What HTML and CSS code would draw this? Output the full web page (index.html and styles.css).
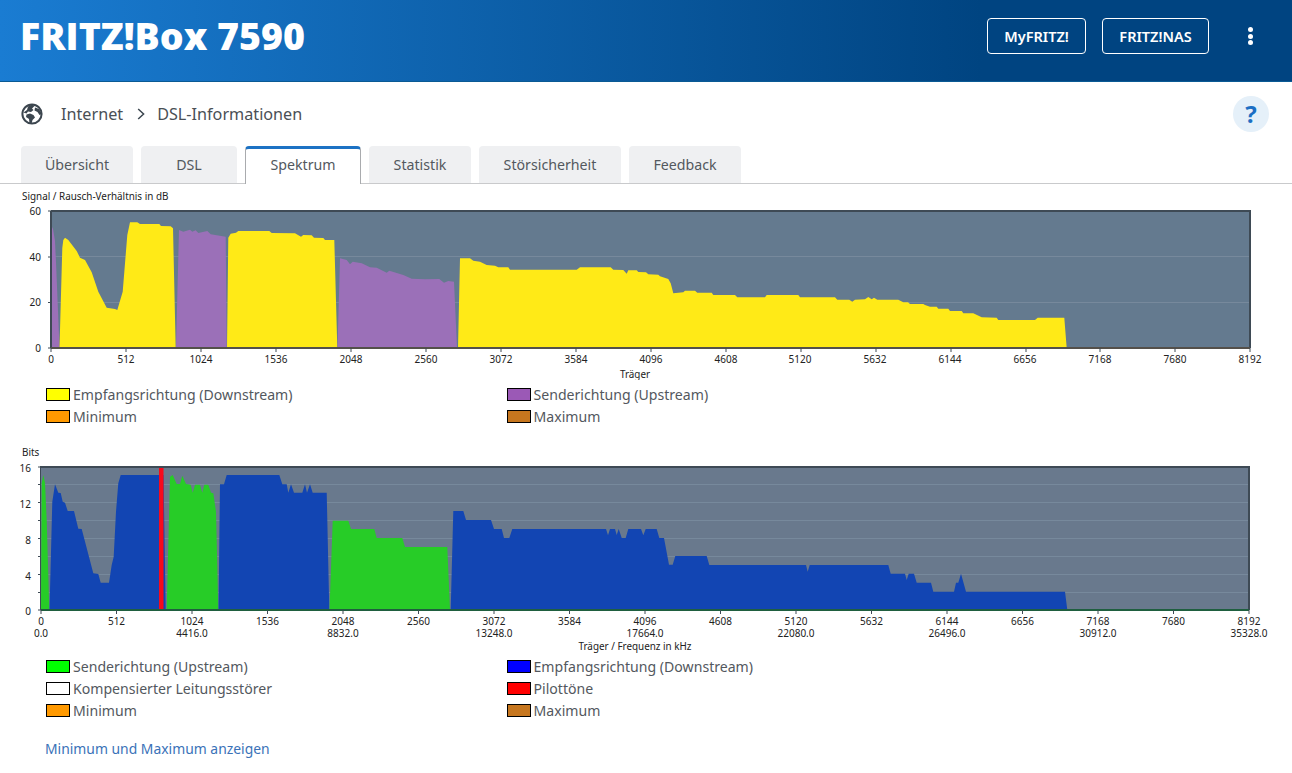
FILE: index.html
```html
<!DOCTYPE html>
<html lang="de">
<head>
<meta charset="utf-8">
<title>FRITZ!Box 7590</title>
<link rel="stylesheet" href="styles.css">
</head>
<body>
<header class="topbar">
  <div class="brand">FRITZ!Box 7590</div>
  <div class="top-actions">
    <a class="top-btn btn-myfritz">MyFRITZ!</a>
    <a class="top-btn btn-nas">FRITZ!NAS</a>
    <span class="kebab"><i></i><i></i><i></i></span>
  </div>
</header>
<div class="crumbs">
  <svg class="globe" viewBox="0 0 22 22" width="22" height="22" aria-hidden="true">
    <circle cx="11" cy="11" r="9.6" fill="#fff" stroke="#3c464f" stroke-width="2"/>
    <path fill="#3c464f" d="M2.5 9.5 6 7l1-3.5L11 1.5l2.5 1.5L11 5.5 12.5 7 10 9 7 8.5 5.5 10.5Z"/>
    <path fill="#3c464f" d="M5.5 11.5 9 10.5l3.5 1.5 1.5 2.5-2.5 2.5-1 4-2-.5-.5-4.5-3-2Z"/>
    <path fill="#3c464f" d="M14 4.5l4 1.5 3 5-2.5 1-2-3-3-1.5Z"/>
  </svg>
  <span class="crumb-first">Internet</span>
  <svg class="chev" viewBox="0 0 8 12" width="8" height="12" aria-hidden="true"><path d="M1.2 1 6.6 6 1.2 11" fill="none" stroke="#3c464f" stroke-width="1.5"/></svg>
  <span class="crumb-last">DSL-Informationen</span>
  <span class="help">?</span>
</div>
<nav class="tabs">
  <a class="tab">Übersicht</a>
  <a class="tab">DSL</a>
  <a class="tab active">Spektrum</a>
  <a class="tab">Statistik</a>
  <a class="tab">Störsicherheit</a>
  <a class="tab">Feedback</a>
</nav>
<main class="content">
  <svg class="chart chart-snr" viewBox="0 190 1292 190" role="img">
    <text class="ctitle" x="22" y="200">Signal / Rausch-Verhältnis in dB</text>
    <rect class="plot" x="51" y="211" width="1199" height="137"/>
    <path class="grid" d="M51 256.5H1250M51 302.5H1250"/>
    <polygon class="snr-up" points="51,348 51,240 52,227 53,229 55,241 56,262 59.5,348"/>
    <polygon class="snr-down" points="59.5,348 62.3,248 63.3,240 65,237.7 68.3,240 76.7,251 80,257.7 85,260 91.7,272.3 98.3,291.7 106.7,307.7 115,309 117.3,310 122.7,291.7 127.3,235 130,222.3 137.3,222.3 140,224 159.3,224 161,226 170.7,226.3 173,228.3 175.7,348"/>
    <polygon class="snr-up" points="176,348 179,230 183.3,231.7 190,229.7 192.3,231.7 195.7,230.3 198.3,233 207.3,231 210.7,234.3 225.7,236.7 226.7,348"/>
    <polygon class="snr-down" points="227,348 228.3,237.7 230.7,233.7 236,232.7 238.3,231 269.3,231 271.7,233 295,233.3 301,236.7 303.3,235 311.7,235.3 314,237.7 323.3,238 325,240 334.3,240 337.3,348"/>
    <polygon class="snr-up" points="337.5,348 340,258.3 346.7,260 350,264.3 352.7,261.7 361.7,263.3 370,267.3 376.7,267.7 386.7,272.7 389.3,270.7 403.3,275 411.7,278.7 425,279.3 439.3,279 444,282.7 448.3,281 454,281.7 457,348"/>
    <polygon class="snr-down" points="458,348 460,258.3 470,258.3 473.3,260.7 480,261.7 486.7,265 495,265.7 498.3,267.3 508.3,267.3 510,269.7 576.7,269.7 580,267.3 610.7,267.3 613.3,269.7 623.3,270 626.7,273.7 628.3,270.3 636.7,270.3 638.3,272 646,272.3 648.3,274.3 658.3,274.7 660,276.3 668.3,279 670.7,283.3 673.3,293.3 683.3,292.3 685,290.7 695,290.7 697.3,292.7 711.7,292.7 713.3,295 735,295 737.3,297.3 765,297.3 766.7,295 798.3,295 800,297.3 835,297.3 837.3,299.7 849.3,299.7 852.3,301.7 855,299.7 865,299.3 868.3,297 871.7,299.3 874,297.7 877.3,299.7 898.3,299.7 903.3,302.3 908,302.3 910,304 923.3,304 925,305 930,306.7 936.7,306.7 938.3,308.7 948.3,308.7 950,311 961.7,311 963.3,313.3 973.3,313.3 981.7,317.3 996.7,317.7 998.3,320 1035,320 1037.7,317.7 1064.3,317.7 1066.7,348"/>
    <path class="frame" d="M51 211H1250V348M51 211V348"/>
    <path class="axis-b1" d="M51 348H1250"/>
    <path class="tick" d="M48 211H51M48 257H51M48 302.5H51M48 348H51M51 348v4M126 348v4M201 348v4M276 348v4M351 348v4M426 348v4M501 348v4M576 348v4M651 348v4M726 348v4M801 348v4M876 348v4M951 348v4M1026 348v4M1100 348v4M1175 348v4M1250 348v4"/>
    <g class="ylab">
      <text x="41" y="215">60</text><text x="41" y="261">40</text><text x="41" y="306">20</text><text x="41" y="352">0</text>
    </g>
    <g class="xlab">
      <text x="51" y="363">0</text><text x="126" y="363">512</text><text x="201" y="363">1024</text><text x="276" y="363">1536</text><text x="351" y="363">2048</text><text x="426" y="363">2560</text><text x="501" y="363">3072</text><text x="576" y="363">3584</text><text x="651" y="363">4096</text><text x="726" y="363">4608</text><text x="800" y="363">5120</text><text x="875" y="363">5632</text><text x="950" y="363">6144</text><text x="1025" y="363">6656</text><text x="1100" y="363">7168</text><text x="1175" y="363">7680</text><text x="1250" y="363">8192</text>
    </g>
    <text class="axtitle" x="635" y="378">Träger</text>
  </svg>
  <div class="legend">
    <div class="leg"><i class="sw sw-yellow"></i>Empfangsrichtung (Downstream)</div>
    <div class="leg"><i class="sw sw-purple"></i>Senderichtung (Upstream)</div>
    <div class="leg"><i class="sw sw-orange"></i>Minimum</div>
    <div class="leg"><i class="sw sw-brown"></i>Maximum</div>
  </div>
  <svg class="chart chart-bits" viewBox="0 445 1292 210" role="img">
    <text class="ctitle" x="22" y="456">Bits</text>
    <rect class="plot plot2" x="41" y="467" width="1208" height="143"/>
    <path class="grid" d="M41 484.5H1249M41 502.5H1249M41 520.5H1249M41 538.5H1249M41 556.5H1249M41 574.5H1249M41 592.5H1249"/>
    <polygon class="b-up" points="41,610 41.7,483.3 43.3,475 45,483 46.7,520 49.3,610"/>
    <polygon class="b-down" points="49.5,610 52.3,501.7 55,484.3 58.3,492.7 60.7,493 62.7,501.7 65,502.7 67.7,511 74,511 78.3,528.7 81.7,529 93.3,573.3 98.3,574 100.7,582.7 109,582.7 111.7,565 113.7,556.7 116,511.7 118.3,483.3 120.7,475 163.5,475 165.7,610"/>
    <polygon class="b-up" points="166.7,610 170,476.7 172.7,475 176.7,484 180,484 182.3,475.7 186,484 190.7,484.7 192.7,492.7 195,484.7 200,484.7 202.3,492.7 204.3,484.7 208.3,484.7 211,492.7 213.3,493.3 216,511.7 218.3,610"/>
    <polygon class="b-down" points="218.5,610 220,484.3 224,484.3 226.7,475 279.3,475 282.3,484.3 286.7,484.3 288.3,492.7 291,484.3 294,492.7 302.3,492.7 305,484.3 307,492.7 310,484.3 312.7,492.7 326.7,492.7 329.3,610"/>
    <polygon class="b-up" points="329.5,610 332.7,520.7 348.3,520.7 351,529 374.3,529 376.7,538 402.3,538 405,547 447.3,547 450,610"/>
    <polygon class="b-down" points="450.7,610 453.3,511 463.3,511 466,520 491,520 494,529 501.7,529 504,538 509.3,538 512.3,529 606,529 608,535.3 610,529 615,529 616.7,535 618.7,529 621.7,538 625.7,538 628.3,529 641,529 643.3,535.3 645.7,529 656.7,529 659.3,538 664,538 669,564.7 672.7,564.7 675.3,556 706.7,556 709.3,565 806,565 807.7,571.7 809.7,565 888.3,565 890.7,573.7 905,573.7 906.7,580 908.7,573.7 914,573.7 916.7,582.7 931,582.7 933.3,591.7 954,591.7 956,582.7 958.3,582.7 961,573.7 966,591.7 1065,591.7 1067.3,610"/>
    <rect class="pilot" x="159" y="467" width="4.5" height="143"/>
    <path class="frame" d="M41 467H1249V610"/>
    <path class="axis-b2" d="M41 610H1249"/>
    <path class="axis-l2" d="M40.5 466V610"/>
    <path class="tick" d="M38 467H41M38 484.5H41M38 502.5H41M38 520.5H41M38 538.5H41M38 556.5H41M38 574.5H41M38 592.5H41M38 610H41M41 610v4M116.5 610v4M192 610v4M267.5 610v4M343 610v4M418.5 610v4M494 610v4M569.5 610v4M645 610v4M720.5 610v4M796 610v4M871.5 610v4M947 610v4M1022.5 610v4M1098 610v4M1173.5 610v4M1249 610v4"/>
    <g class="ylab">
      <text x="31" y="472">16</text><text x="31" y="508">12</text><text x="31" y="544">8</text><text x="31" y="580">4</text><text x="31" y="615">0</text>
    </g>
    <g class="xlab">
      <text x="41" y="625">0</text><text x="116.5" y="625">512</text><text x="192" y="625">1024</text><text x="267.5" y="625">1536</text><text x="343" y="625">2048</text><text x="418.5" y="625">2560</text><text x="494" y="625">3072</text><text x="569.5" y="625">3584</text><text x="645" y="625">4096</text><text x="720.5" y="625">4608</text><text x="796" y="625">5120</text><text x="871.5" y="625">5632</text><text x="947" y="625">6144</text><text x="1022.5" y="625">6656</text><text x="1098" y="625">7168</text><text x="1173.5" y="625">7680</text><text x="1249" y="625">8192</text>
      <text x="41" y="637">0.0</text><text x="192" y="637">4416.0</text><text x="343" y="637">8832.0</text><text x="494" y="637">13248.0</text><text x="645" y="637">17664.0</text><text x="796" y="637">22080.0</text><text x="947" y="637">26496.0</text><text x="1098" y="637">30912.0</text><text x="1249" y="637">35328.0</text>
    </g>
    <text class="axtitle" x="635" y="650">Träger / Frequenz in kHz</text>
  </svg>
  <div class="legend legend-bits">
    <div class="leg"><i class="sw sw-green"></i>Senderichtung (Upstream)</div>
    <div class="leg"><i class="sw sw-blue"></i>Empfangsrichtung (Downstream)</div>
    <div class="leg"><i class="sw sw-white"></i>Kompensierter Leitungsstörer</div>
    <div class="leg"><i class="sw sw-red"></i>Pilottöne</div>
    <div class="leg"><i class="sw sw-orange"></i>Minimum</div>
    <div class="leg"><i class="sw sw-brown"></i>Maximum</div>
  </div>
  <a class="minmax">Minimum und Maximum anzeigen</a>
</main>
</body>
</html>
```
FILE: styles.css
```css
* { box-sizing: border-box; }
html, body { margin: 0; padding: 0; }
body {
  width: 1292px;
  height: 773px;
  overflow: hidden;
  background: #fff;
  color: #4a4f55;
  font-family: "Noto Sans", "Open Sans", sans-serif;
}
.topbar {
  height: 82px;
  display: flex;
  align-items: center;
  justify-content: space-between;
  padding: 0 0 9px 20px;
  background: linear-gradient(90deg, #1a7cd2 0, #004481 76%);
  border-bottom: 1px solid #0a5a94;
}
.brand {
  color: #fff;
  font-family: "Open Sans", sans-serif;
  font-weight: 800;
  font-size: 37.5px;
  line-height: 44px;
  white-space: nowrap;
}
.top-actions { display: flex; align-items: center; }
.top-btn {
  height: 36px;
  display: flex;
  align-items: center;
  justify-content: center;
  border: 1px solid #fff;
  border-radius: 4px;
  color: #fff;
  font-weight: 600;
  font-size: 14.5px;
  white-space: nowrap;
}
.btn-myfritz { width: 99px; margin-right: 16px; }
.btn-nas { width: 107px; margin-right: 39px; }
.kebab {
  width: 5px;
  margin-right: 39px;
  display: flex;
  flex-direction: column;
  gap: 1.5px;
}
.kebab i { display: block; width: 5px; height: 5px; border-radius: 50%; background: #fff; }
.crumbs {
  height: 64px;
  display: flex;
  align-items: center;
  padding: 0 0 1px 21px;
  font-size: 16.2px;
  color: #4a4f55;
}
.globe { flex: none; margin-right: 18px; }
.chev { flex: none; margin: 1px 12px 0 14px; }
.help {
  width: 36px;
  height: 36px;
  margin-left: auto;
  margin-right: 23px;
  border-radius: 50%;
  background: #e5f0f9;
  color: #1c6fc4;
  font-weight: 700;
  font-size: 24px;
  line-height: 36px;
  text-align: center;
}
.tabs {
  height: 38px;
  display: grid;
  grid-template-columns: 112px 96px 116px 102px 142px 112px;
  gap: 8px;
  padding-left: 21px;
  border-bottom: 1px solid #c9cacc;
}
.tab {
  display: flex;
  align-items: center;
  justify-content: center;
  height: 37px;
  background: #eff0f2;
  border-radius: 4px 4px 0 0;
  font-size: 14.2px;
  color: #53585e;
}
.tab.active {
  height: 38px;
  padding-bottom: 4px;
  background: #fff;
  border: 1px solid #a9abae;
  border-top: 3px solid #1c72c4;
  border-bottom: 0;
}
.content { padding-top: 6px; }
.chart { display: block; width: 1292px; }
.chart-snr { height: 190px; }
.chart-bits { height: 210px; margin-top: 18px; }
.plot { fill: #647a8f; }
.plot2 { fill: #69798d; }
.grid { stroke: #77899c; stroke-width: 1; fill: none; }
.snr-up { fill: #9b70b8; }
.snr-down { fill: #ffea17; }
.b-up { fill: #27cc27; }
.b-down { fill: #1245b3; }
.pilot { fill: #f8091b; }
.frame { stroke: #3e4a55; stroke-width: 2; fill: none; }
.axis-b1 { stroke: #54504a; stroke-width: 2; fill: none; }
.axis-b2 { stroke: #1f5f3f; stroke-width: 2; fill: none; }
.axis-l2 { stroke: #3e4a55; stroke-width: 1; fill: none; }
.tick { stroke: #3e4a55; stroke-width: 1; fill: none; }
.ctitle, .axtitle {
  font-family: "Noto Sans", sans-serif;
  font-size: 9.9px;
  fill: #222;
}
.axtitle { text-anchor: middle; }
.ylab text, .xlab text {
  font-family: "Noto Sans", sans-serif;
  font-size: 10px;
  fill: #222;
}
.ylab text { text-anchor: end; }
.xlab text { text-anchor: middle; }
.legend {
  display: grid;
  grid-template-columns: 460.5px 1fr;
  grid-auto-rows: 22px;
  padding-left: 46px;
  margin-top: 3px;
  font-size: 14.1px;
  color: #53585e;
}
.legend-bits { margin-top: 0; }
.leg { display: flex; align-items: center; white-space: nowrap; }
.sw {
  display: block;
  flex: none;
  width: 24px;
  height: 13px;
  margin-right: 3px;
  border: 1px solid #000;
}
.sw-yellow { background: #ffff00; }
.sw-purple { background: #9b59b6; }
.sw-orange { background: #ff9900; }
.sw-brown { background: #c6761e; }
.sw-green { background: #00ff00; }
.sw-blue { background: #0000ff; }
.sw-white { background: #fff; }
.sw-red { background: #ff0000; }
.minmax {
  display: block;
  margin: 17px 0 0 45px;
  line-height: 22px;
  font-size: 13.9px;
  color: #3a72b8;
}
```
